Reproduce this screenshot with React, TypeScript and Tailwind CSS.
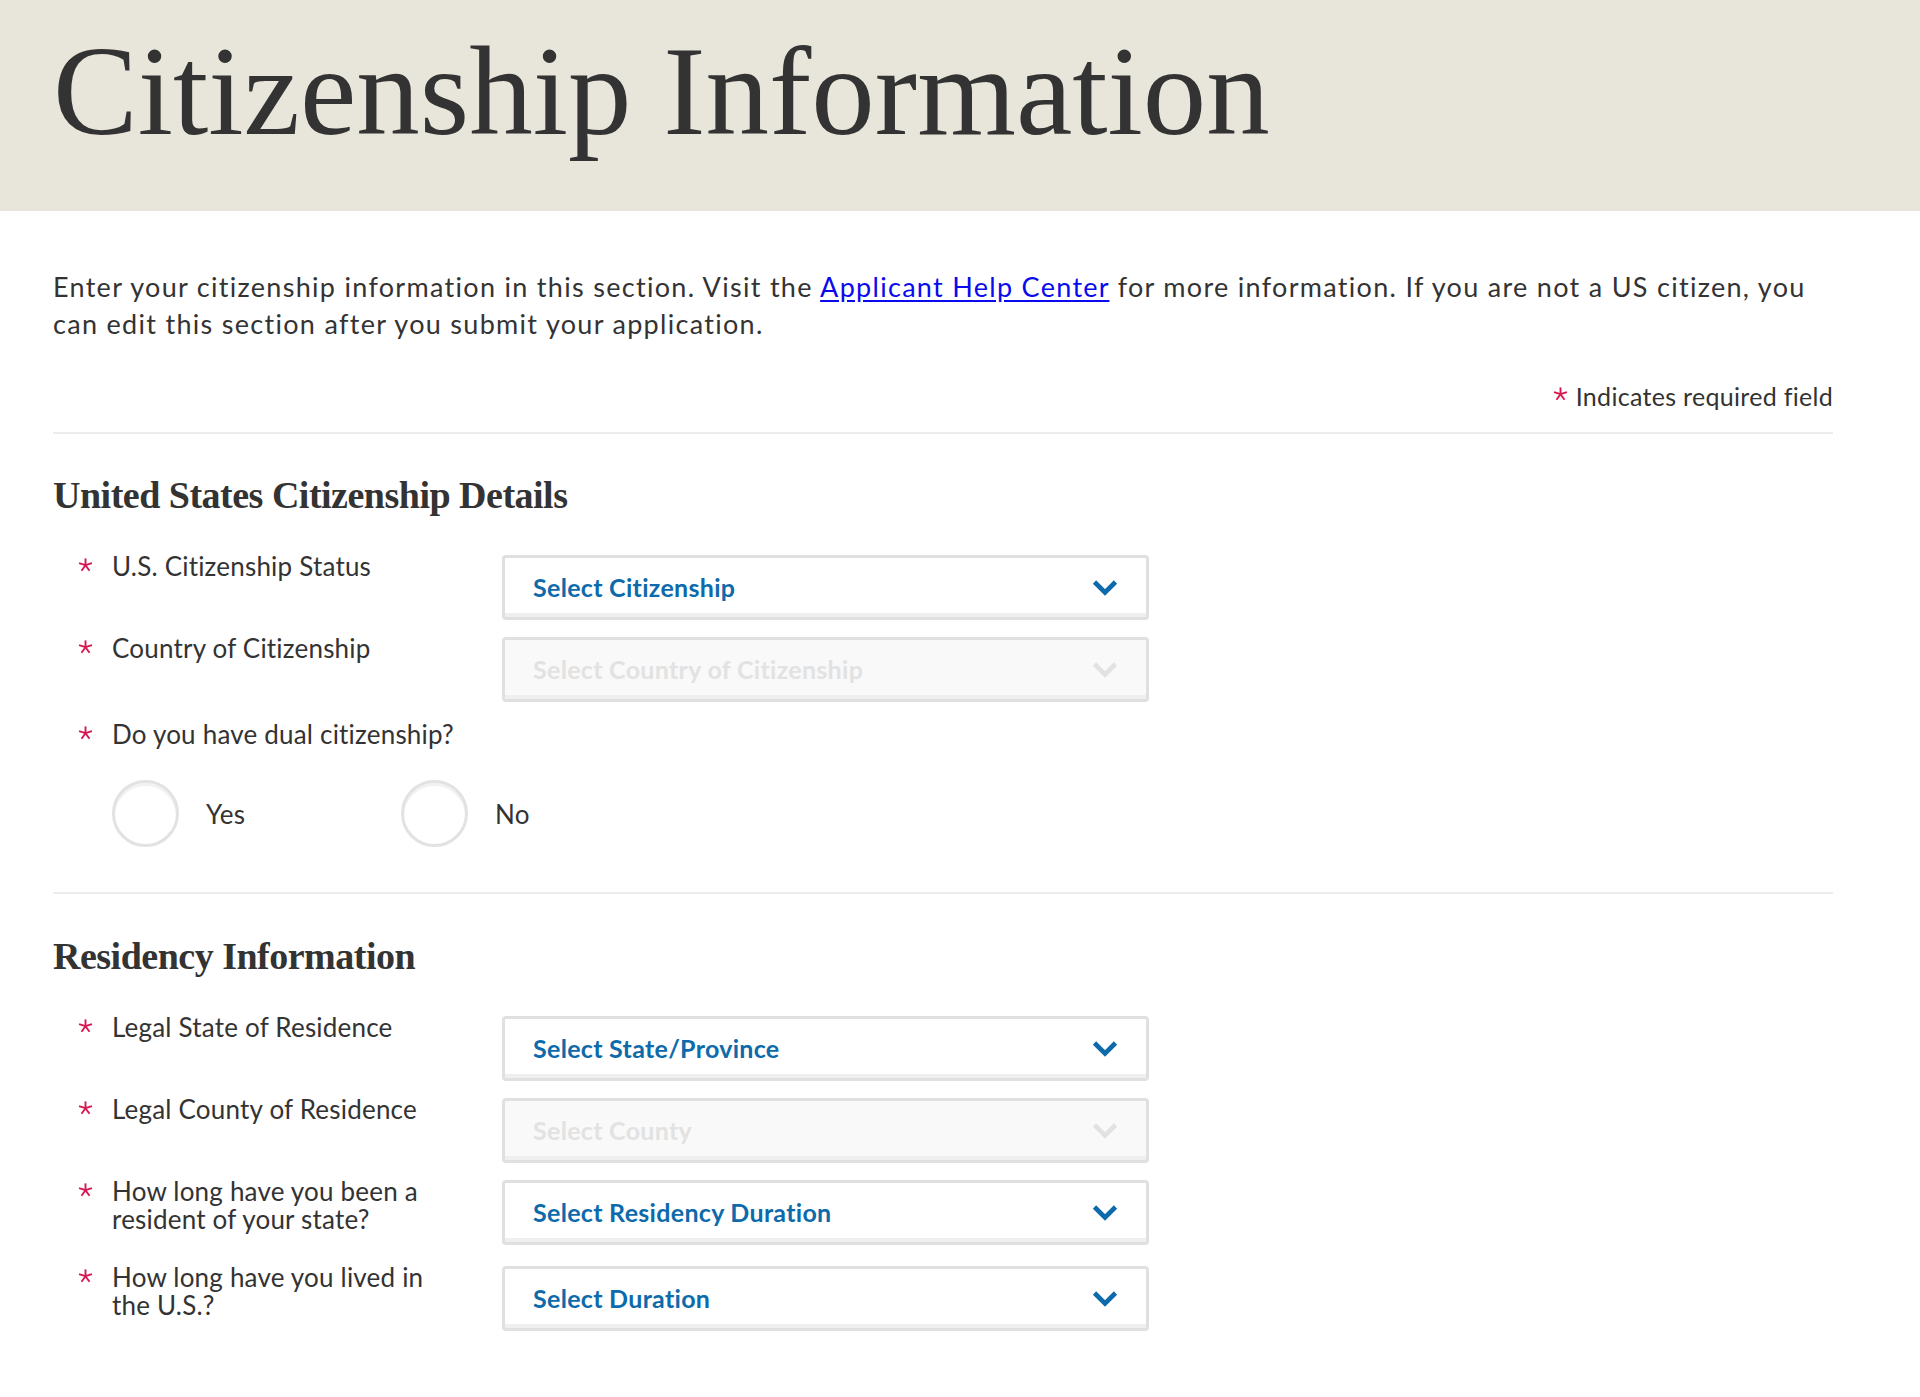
import type { ReactNode } from "react";

const body = { fontFamily: 'Lato, "Open Sans", sans-serif' };
const serif = { fontFamily: '"Liberation Serif", "Times New Roman", serif' };

function Star({ className = "" }: { className?: string }) {
  // five-armed asterisk
  const arms = [-90, -18, 198, 54, 126];
  return (
    <svg width="15" height="14" viewBox="0 0 15 14" className={className}>
      {arms.map((a) => {
        const r = (a * Math.PI) / 180;
        return (
          <line
            key={a}
            x1={7.5}
            y1={7.2}
            x2={7.5 + Math.cos(r) * 6.8}
            y2={7.2 + Math.sin(r) * 6.8}
            stroke="#d6164f"
            strokeWidth="1.9"
          />
        );
      })}
    </svg>
  );
}

function Chevron({ color }: { color: string }) {
  return (
    <svg width="26" height="18" viewBox="0 0 26 18" fill="none">
      <polyline points="2.5,3 13,13.5 23.5,3" stroke={color} strokeWidth="4.6" />
    </svg>
  );
}

function SelectBox({ text, disabled = false }: { text: string; disabled?: boolean }) {
  return (
    <div
      className={`flex h-[65px] w-[647px] shrink-0 items-center justify-between rounded-[4px] border-[3px] border-[#e0e0e0] pl-[28px] pr-[28px] shadow-[inset_0_-4px_0_#efefef] ${
        disabled ? "bg-[#f9f9f9]" : "bg-white"
      }`}
    >
      <span
        className={`text-[25px] font-bold leading-none tracking-[0.3px] ${disabled ? "text-[#e2e2e2]" : "text-[#0d6aab]"}`}
        style={body}
      >
        {text}
      </span>
      <Chevron color={disabled ? "#e2e2e2" : "#0d6aab"} />
    </div>
  );
}

function Label({ children }: { children: ReactNode }) {
  return (
    <div className="flex w-[449px] shrink-0 items-start -mt-[3px] pl-[25px]">
      <Star className="mt-[6px] shrink-0" />
      <div className="ml-[19px] w-[345px] text-[26px] leading-[28px] tracking-[0.2px] text-[#333]" style={body}>
        {children}
      </div>
    </div>
  );
}

function Row({ label, select, disabled, className = "" }: { label: ReactNode; select: string; disabled?: boolean; className?: string }) {
  return (
    <div className={`flex items-start ${className}`}>
      <Label>{label}</Label>
      <SelectBox text={select} disabled={disabled} />
    </div>
  );
}

function Radio({ label }: { label: string }) {
  return (
    <div className="flex w-[289px] items-center">
      <div className="h-[67px] w-[67px] rounded-full border-[3px] border-[#e2e2e2] shadow-[inset_0_3px_0_#f2f2f2]" />
      <span className="ml-[27px] text-[26px] leading-[28px] tracking-[0.3px] text-[#333]" style={body}>
        {label}
      </span>
    </div>
  );
}

function Heading({ children }: { children: ReactNode }) {
  return (
    <h2 className="text-[38px] font-bold leading-[44px] tracking-[-0.5px] text-[#333]" style={serif}>
      {children}
    </h2>
  );
}

export default function App() {
  return (
    <div className="min-h-[1397px] w-full bg-white">
      <header className="h-[211px] bg-[#e8e6da] pl-[53px] pt-[28px]">
        <h1 className="text-[127px] font-normal leading-none text-[#333]" style={serif}>
          Citizenship Information
        </h1>
      </header>

      <main className="w-[1833px] pl-[53px] pb-[65px]">
        <p className="mt-[57px] text-[27px] leading-[37px] tracking-[1.3px] text-[#333]" style={body}>
          Enter your citizenship information in this section. Visit the{" "}
          <a href="#" className="text-[#0a0aee] underline underline-offset-[3px]">
            Applicant Help Center
          </a>{" "}
          for more information. If you are not a US citizen, you can edit this section after you submit your
          application.
        </p>

        <div
          className="mt-[39px] flex items-start justify-end text-[25px] leading-[30px] tracking-[0.3px] text-[#333]"
          style={body}
        >
          <Star className="mr-[8px] mt-[6px]" />
          <span>Indicates required field</span>
        </div>

        <div className="mt-[21px] h-[2px] bg-[#ececec]" />

        <section className="mt-[39px]">
          <Heading>United States Citizenship Details</Heading>
          <Row className="mt-[38px]" label="U.S. Citizenship Status" select="Select Citizenship" />
          <Row className="mt-[17px]" label="Country of Citizenship" select="Select Country of Citizenship" disabled />
          <div className="mt-[21px]">
            <div className="-mt-[3px] flex items-start pl-[25px]">
              <Star className="mt-[6px] shrink-0" />
              <div className="ml-[19px] text-[26px] leading-[28px] tracking-[0.2px] text-[#333]" style={body}>
                Do you have dual citizenship?
              </div>
            </div>
            <div className="mt-[32px] flex pl-[59px]">
              <Radio label="Yes" />
              <Radio label="No" />
            </div>
          </div>
        </section>

        <div className="mt-[45px] h-[2px] bg-[#ececec]" />

        <section className="mt-[40px]">
          <Heading>Residency Information</Heading>
          <Row className="mt-[38px]" label="Legal State of Residence" select="Select State/Province" />
          <Row className="mt-[17px]" label="Legal County of Residence" select="Select County" disabled />
          <Row className="mt-[17px]" label="How long have you been a resident of your state?" select="Select Residency Duration" />
          <Row className="mt-[21px]" label="How long have you lived in the U.S.?" select="Select Duration" />
        </section>
      </main>
    </div>
  );
}
